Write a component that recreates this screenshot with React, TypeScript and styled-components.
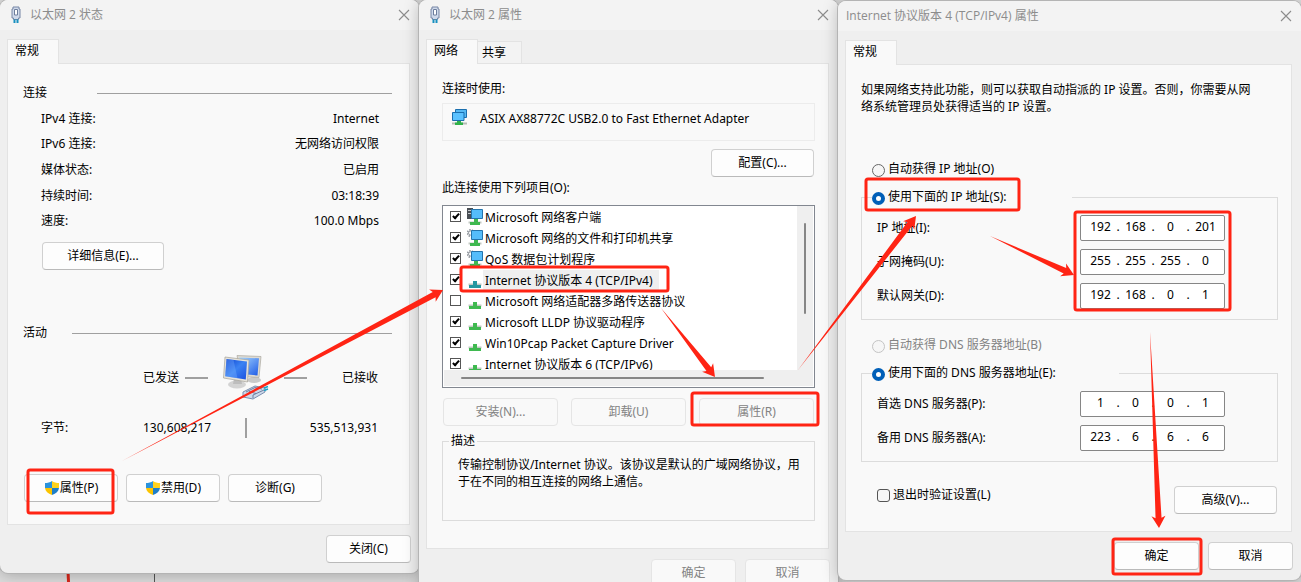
import React from "react";
import styled, { createGlobalStyle, css } from "styled-components";

const GlobalStyle = createGlobalStyle`
  *, *::before, *::after { box-sizing: border-box; }
  body {
    margin: 0;
    background: #dcdcdc;
    color: #000;
    font: 12px/18px "Noto Sans", "Noto Sans CJK SC", sans-serif;
  }
  button, input { font: inherit; color: inherit; }
  p, ul, dl, dd { margin: 0; padding: 0; }
`;

/* ---------- desktop and windows ---------- */

const Desktop = styled.main`
  position: relative;
  height: 100vh;
  overflow: hidden;
  display: grid;
  grid-template-columns: 419fr 419fr 463fr;
  align-items: start;
`;

const Backdrop = styled.svg`
  position: absolute;
  inset: 0;
  width: 100%;
  height: 100%;
`;

const Annotations = styled(Backdrop)`
  z-index: 2;
  pointer-events: none;
`;

const Window = styled.section<{ $lowered?: boolean }>`
  position: relative;
  min-width: 0;
  margin-top: ${(p) => (p.$lowered ? "1px" : "0")};
  padding-bottom: 10px;
  background: #efefef;
  border-radius: 8px;
  box-shadow: 0 0 0 1px #b4b4b4, 0 2px 16px rgba(0, 0, 0, 0.26);
`;

const TitleBar = styled.header`
  display: flex;
  align-items: center;
  height: 30px;
  padding: 0 9px 0 8px;
  background: #f3f3f3;
  border-radius: 8px 8px 0 0;
  color: #8c8c8c;
`;

const Title = styled.h1`
  flex: 1;
  margin: 0;
  font-family: "Open Sans", "Noto Sans CJK SC", sans-serif;
  font-size: 12px;
  font-weight: 400;
`;

const CloseButton = styled.button`
  display: flex;
  padding: 0;
  border: 0;
  background: none;
  color: #8c8c8c;
`;

const TabStrip = styled.div`
  display: flex;
  align-items: flex-end;
  height: 33px;
  padding-left: 7px;
`;

const Tab = styled.button<{ $active?: boolean }>`
  border: 1px solid #e3e3e3;
  border-bottom: 0;
  text-align: left;
  ${(p) =>
    p.$active
      ? css`
          position: relative;
          z-index: 1;
          width: 52px;
          height: 25px;
          margin-bottom: -1px;
          padding: 0 0 2px 7px;
          background: #f9f9f9;
        `
      : css`
          width: 44px;
          height: 22px;
          padding: 0 0 0 4px;
          border-left: 0;
          background: #f3f3f3;
        `}
`;

const Panel = styled.div<{ $top: number; $bottom: number }>`
  margin: 0 9px 0 7px;
  padding: ${(p) => p.$top}px 13px ${(p) => p.$bottom}px 15px;
  border: 1px solid #e3e3e3;
  background: #f9f9f9;
`;

const Footer = styled.footer`
  display: flex;
  justify-content: flex-end;
  gap: 9px;
  padding: 10px 8px 0;
`;

const PushButton = styled.button<{ $width: number }>`
  display: flex;
  align-items: center;
  justify-content: center;
  width: ${(p) => p.$width}px;
  height: 28px;
  padding: 0 0 1px;
  border: 1px solid #d0d0d0;
  border-bottom-color: #bababa;
  border-radius: 4px;
  background: #fdfdfd;
  &:disabled {
    border-color: #e5e5e5;
    background: #f9f9f9;
    color: #838383;
  }
`;

/* ---------- status window ---------- */

const SectionHead = styled.h2<{ $labelWidth: number }>`
  display: grid;
  grid-template-columns: ${(p) => p.$labelWidth}px 1fr;
  align-items: center;
  margin: 0 4px 0 0;
  font-size: 12px;
  font-weight: 400;
  &::after {
    content: "";
    height: 1px;
    background: #a0a0a0;
  }
`;

const StatusList = styled.dl`
  display: flex;
  flex-direction: column;
  height: 128px;
  margin: 4px 17px 8px 18px;
`;

const StatusRow = styled.div`
  flex: 1;
  display: flex;
  align-items: center;
  justify-content: space-between;
`;

const DetailsRow = styled.div`
  padding: 0 0 54px 19px;
`;

const Activity = styled.div`
  display: grid;
  grid-template-columns: 102px 80px 46px 1fr;
  grid-template-rows: 48px 20px;
  row-gap: 16px;
  align-items: center;
  margin: 12px 18px 36px 18px;
`;

const SentHead = styled.div`
  grid-column: 2;
  display: flex;
  align-items: center;
  gap: 6px;
`;

const ReceivedHead = styled.div`
  display: flex;
  align-items: center;
  justify-content: space-between;
  padding-left: 15px;
`;

const Dash = styled.span`
  width: 23px;
  height: 2px;
  background: #a0a0a0;
`;

const Divider = styled.span`
  justify-self: center;
  width: 2px;
  height: 20px;
  background: #a0a0a0;
`;

const Received = styled.span`
  text-align: right;
`;

const ActionRow = styled.div`
  display: flex;
  gap: 8px;
  padding-left: 1px;
`;

/* ---------- adapter properties window ---------- */

const AdapterBox = styled.div`
  display: flex;
  align-items: flex-start;
  gap: 12px;
  height: 38px;
  margin: 5px 0 8px;
  padding: 5px 8px;
  border: 1px solid #ececec;
`;

const AdapterName = styled.span`
  padding-top: 1px;
`;

const ConfigureRow = styled.div`
  display: flex;
  justify-content: flex-end;
  padding: 0 1px 2px 0;
`;

const ListFrame = styled.div`
  display: grid;
  grid-template-columns: 1fr 16px;
  grid-template-rows: 164px 16px;
  height: 183px;
  margin: 8px 0 10px;
  padding: 0 1px 1px;
  border: 1px solid #828790;
  background: #fff;
`;

const ItemList = styled.ul`
  overflow: hidden;
  list-style: none;
`;

const Item = styled.label`
  display: flex;
  align-items: center;
  height: 21px;
  padding-left: 6px;
`;

const ItemCheck = styled.input`
  appearance: none;
  display: flex;
  justify-content: center;
  width: 11px;
  height: 11px;
  margin: 0 6px 0 0;
  border: 1px solid #555;
  background: #fff;
  &:checked::before {
    content: "";
    width: 4px;
    height: 7px;
    border: solid #000;
    border-width: 0 2px 2px 0;
    transform: rotate(42deg);
  }
`;

const ItemName = styled.span<{ $selected?: boolean }>`
  height: 20px;
  padding: 2px 6px 0 2px;
  line-height: 18px;
  white-space: nowrap;
  background: ${(p) => (p.$selected ? "#efefef" : "transparent")};
`;

const VerticalTrack = styled.div`
  padding: 17px 0 0 7px;
  background: #efefef;
  &::before {
    content: "";
    display: block;
    width: 2px;
    height: 91px;
    border-radius: 1px;
    background: #868686;
  }
`;

const HorizontalTrack = styled.div`
  grid-column: 1 / -1;
  padding: 7px 49px 0 17px;
  background: #efefef;
  &::before {
    content: "";
    display: block;
    height: 2px;
    border-radius: 1px;
    background: #868686;
  }
`;

const ItemActions = styled.div`
  display: flex;
  justify-content: space-between;
  padding: 0 1px 6px;
`;

const Description = styled.fieldset`
  height: 89px;
  min-width: 0;
  margin: 0;
  padding: 6px 12px 0 8px;
  border: 1px solid #dcdcdc;
  legend {
    margin-left: -2px;
    padding: 0 2px;
  }
  p {
    padding-left: 7px;
    line-height: 17px;
  }
`;

/* ---------- IPv4 window ---------- */

const Intro = styled.p`
  padding: 0 20px 45px 0;
  line-height: 17px;
`;

const Choice = styled.label<{ $indent?: number; $muted?: boolean }>`
  display: flex;
  align-items: center;
  gap: 3px;
  height: 18px;
  padding-left: ${(p) => p.$indent ?? 0}px;
  color: ${(p) => (p.$muted ? "#838383" : "inherit")};
`;

const Radio = styled.input`
  appearance: none;
  width: 13px;
  height: 13px;
  margin: 2px 0 0;
  border: 1px solid #666;
  border-radius: 50%;
  background: #f6f6f6;
  &:checked {
    border: 4px solid #005fb8;
    background: #fff;
  }
  &:disabled {
    border-color: #c4c4c4;
  }
`;

const SquareCheck = styled.input`
  appearance: none;
  width: 13px;
  height: 13px;
  margin: 0;
  border: 1px solid #555;
  border-radius: 3px;
  background: #f6f6f6;
`;

const AddressGroup = styled.fieldset<{ $gap: number }>`
  display: block;
  min-width: 0;
  margin: 10px 0 16px;
  padding: 9px 52px 10px 10px;
  border: 1px solid #dcdcdc;
  legend {
    width: ${(p) => p.$gap}px;
    padding: 0;
  }
`;

const AddressRows = styled.div`
  display: grid;
  gap: 8px;
  padding-left: 5px;
`;

const AddressRow = styled.div`
  display: flex;
  align-items: center;
  justify-content: space-between;
`;

const AddressBox = styled.div`
  display: flex;
  align-items: center;
  width: 145px;
  height: 26px;
  padding: 0 0 2px 7px;
  border: 1px solid #868686;
  border-radius: 2px;
  background: #fff;
`;

const Octet = styled.input`
  width: 25px;
  height: 18px;
  padding: 0;
  border: 0;
  background: none;
  text-align: center;
`;

const Dot = styled.span`
  width: 10px;
  text-align: center;
`;

const ValidateRow = styled.div`
  display: flex;
  justify-content: space-between;
  align-items: flex-start;
  padding: 8px 1px 0 16px;
`;

/* ---------- icons ---------- */

const PlugIcon = () => (
  <svg width="22" height="18" viewBox="0 0 22 18" aria-hidden="true">
    <path d="M5 1h6v2h1v9h-1.500v1.500h-5V12H4V3h1z" fill="#cfd9ea" stroke="#7686a5" />
    <path d="M6.500 3.500h3V9h-3z" fill="#fff" stroke="#6d7d9c" />
    <path d="M6.500 13.500V17M9.500 13.500V17" stroke="#1890c0" strokeWidth="2" />
  </svg>
);

const CloseIcon = () => (
  <svg width="12" height="12" viewBox="0 0 12 12" aria-hidden="true">
    <path d="M1 1l10 10M11 1L1 11" stroke="currentColor" strokeWidth="1.100" fill="none" />
  </svg>
);

const ShieldIcon = () => (
  <svg width="16" height="16" viewBox="0 0 16 16" aria-hidden="true">
    <path d="M8 1C6 2.500 3.500 3 1 3v5h7z" fill="#2b93dc" />
    <path d="M8 1c2 1.500 4.500 2 7 2v5H8z" fill="#ffd21c" />
    <path d="M1 8c.3 3.200 3 5.600 7 7V8z" fill="#fbc400" />
    <path d="M15 8c-.3 3.200-3 5.600-7 7V8z" fill="#1f7fc9" />
  </svg>
);

const ComputersIcon = () => (
  <svg width="46" height="46" viewBox="0 0 46 46" aria-hidden="true">
    <defs>
      <linearGradient id="screen" x1="0" y1="0" x2="1" y2="1">
        <stop offset="0" stopColor="#0a3fd0" />
        <stop offset="0.500" stopColor="#3b82f2" />
        <stop offset="1" stopColor="#1b50e0" />
      </linearGradient>
      <linearGradient id="screenBack" x1="0" y1="0" x2="1" y2="1">
        <stop offset="0" stopColor="#a8d8ff" />
        <stop offset="1" stopColor="#1d5ae6" />
      </linearGradient>
    </defs>
    <ellipse cx="31" cy="25" rx="7" ry="3" fill="#c9c9c9" />
    <path d="M14 .5l24 1-2 21-18-1z" fill="#dedbd3" stroke="#aaa79f" strokeWidth="0.700" />
    <path d="M16 2.500l20 .8L34.500 20.500l-10-1z" fill="url(#screenBack)" />
    <ellipse cx="14" cy="29.500" rx="9" ry="4" fill="#d3d3d3" />
    <path d="M11 24h7l1 5h-9z" fill="#bdbdbd" />
    <path d="M2 2l24 3-1.500 22L.5 23z" fill="#e6e3db" stroke="#a5a29a" strokeWidth="0.700" />
    <path d="M3.500 4L24 6.500 22.800 24.500 2.200 21.200z" fill="url(#screen)" />
    <path d="M3.500 4l7 .9 4 18.300-12.300-2z" fill="#7fb4ff" opacity="0.350" />
    <path d="M20 37l12-6 10 2v4l-12 7-10-2z" fill="#ccd8ea" stroke="#7b8eae" />
    <path d="M23 37l9-4.500 7 1.500M30 40l11-5M30 40v3M26 36.500l7 2" stroke="#6d7fa0" fill="none" />
    <path d="M41 33l4-1.500M41 35.500l4-1.500" stroke="#19a3c8" strokeWidth="1.500" />
  </svg>
);

const AdapterIcon = () => (
  <svg width="17" height="17" viewBox="0 0 17 17" aria-hidden="true">
    <path d="M4.500 .5h11v8h-11z" fill="#55b8f2" stroke="#1b6fae" />
    <path d="M1.500 3.500h11.500v8H1.500z" fill="#5bc2ff" stroke="#1b6fae" />
    <path d="M1 14.500h15" stroke="#b5bdb5" strokeWidth="2" />
    <path d="M6 12h4v1.500h2v2.500h-8v-2.500h2z" fill="#31b14a" />
  </svg>
);

type ItemKind = "client" | "service" | "protocol" | "selected";

const ItemIcon = ({ kind }: { kind: ItemKind }) => {
  if (kind === "protocol" || kind === "selected") {
    const fill = kind === "selected" ? "#2597a0" : "#3fb950";
    return (
      <svg width="16" height="19" viewBox="0 0 16 19" aria-hidden="true">
        <path d="M1.500 14.500h13" stroke="#c2c8c2" strokeWidth="2" />
        <path d="M6 11h4v4h4v3H2v-3h4z" fill={fill} />
      </svg>
    );
  }
  return (
    <svg width="16" height="19" viewBox="0 0 16 19" aria-hidden="true">
      {kind === "client" ? (
        <g>
          <path d="M0 1h6v11H0z" fill="#4a4f55" />
          <path d="M1 3.500h3M1 6.500h3" stroke="#c5c9cd" />
        </g>
      ) : (
        <g fill="none" stroke="#9a9fa5">
          <circle cx="3.500" cy="5" r="3" strokeWidth="2" strokeDasharray="1.500 1" />
          <circle cx="3.500" cy="5" r="2" />
        </g>
      )}
      <path d="M4.500 2.500h11v9h-11z" fill="#55bdfb" stroke="#2474ac" />
      <path d="M1.500 15.500h13" stroke="#c2c8c2" strokeWidth="2" />
      <path d="M7 12h4v3h2v3H3v-3h4z" fill="#3fb950" />
    </svg>
  );
};

/* ---------- data ---------- */

const statusRows = [
  ["IPv4 连接:", "Internet"],
  ["IPv6 连接:", "无网络访问权限"],
  ["媒体状态:", "已启用"],
  ["持续时间:", "03:18:39"],
  ["速度:", "100.0 Mbps"],
];

const items: { name: string; kind: ItemKind; off?: boolean }[] = [
  { name: "Microsoft 网络客户端", kind: "client" },
  { name: "Microsoft 网络的文件和打印机共享", kind: "service" },
  { name: "QoS 数据包计划程序", kind: "service" },
  { name: "Internet 协议版本 4 (TCP/IPv4)", kind: "selected" },
  { name: "Microsoft 网络适配器多路传送器协议", kind: "protocol", off: true },
  { name: "Microsoft LLDP 协议驱动程序", kind: "protocol" },
  { name: "Win10Pcap Packet Capture Driver", kind: "protocol" },
  { name: "Internet 协议版本 6 (TCP/IPv6)", kind: "protocol" },
];

type Address = { id: string; label: string; value: string };

const ipFields: Address[] = [
  { id: "ip", label: "IP 地址(I):", value: "192.168.0.201" },
  { id: "mask", label: "子网掩码(U):", value: "255.255.255.0" },
  { id: "gateway", label: "默认网关(D):", value: "192.168.0.1" },
];

const dnsFields: Address[] = [
  { id: "dns1", label: "首选 DNS 服务器(P):", value: "1.0.0.1" },
  { id: "dns2", label: "备用 DNS 服务器(A):", value: "223.6.6.6" },
];

/* Marker frames: x, y, width, height. */
const frames = [
  [28, 470, 85, 43],
  [461, 267, 207, 24],
  [692, 393, 126, 32],
  [866, 179, 153, 31],
  [1075, 212, 155, 98],
  [1113, 539, 88, 35],
];

/* Each arrow runs from a thin tail to its tip: x1, y1, x2, y2. */
const arrows = [
  [122, 461, 443, 290],
  [661, 308, 715, 377],
  [798, 370, 916, 216],
  [990, 236, 1074, 275],
  [1150, 332, 1159, 528],
];

function arrowPath([x1, y1, x2, y2]: number[]) {
  const length = Math.hypot(x2 - x1, y2 - y1);
  const ux = (x2 - x1) / length;
  const uy = (y2 - y1) / length;
  const at = (back: number, side: number) =>
    `${x2 - ux * back - uy * side} ${y2 - uy * back + ux * side}`;
  return `M${x1} ${y1}L${at(10, 3)}L${at(12, 7)}L${x2} ${y2}L${at(12, -7)}L${at(10, -3)}Z`;
}

/* ---------- shared parts ---------- */

const WindowTitle = ({ text, plug }: { text: string; plug?: boolean }) => (
  <TitleBar>
    {plug && <PlugIcon />}
    <Title>{text}</Title>
    <CloseButton aria-label="关闭">
      <CloseIcon />
    </CloseButton>
  </TitleBar>
);

const AddressField = ({ id, label, value }: Address) => (
  <AddressRow>
    <label htmlFor={id}>{label}</label>
    <AddressBox>
      {value.split(".").map((part, i) => (
        <React.Fragment key={i}>
          {i > 0 && <Dot>.</Dot>}
          <Octet
            id={i === 0 ? id : undefined}
            aria-label={i === 0 ? undefined : `${label} ${i + 1}`}
            defaultValue={part}
          />
        </React.Fragment>
      ))}
    </AddressBox>
  </AddressRow>
);

/* ---------- windows ---------- */

const StatusWindow = () => (
  <Window>
    <WindowTitle text="以太网 2 状态" plug />
    <TabStrip>
      <Tab $active>常规</Tab>
    </TabStrip>
    <Panel $top={20} $bottom={22}>
      <SectionHead $labelWidth={74}>连接</SectionHead>
      <StatusList>
        {statusRows.map(([name, value]) => (
          <StatusRow key={name}>
            <dt>{name}</dt>
            <dd>{value}</dd>
          </StatusRow>
        ))}
      </StatusList>
      <DetailsRow>
        <PushButton $width={122}>详细信息(E)...</PushButton>
      </DetailsRow>
      <SectionHead $labelWidth={49}>活动</SectionHead>
      <Activity>
        <SentHead>
          已发送
          <Dash />
        </SentHead>
        <ComputersIcon />
        <ReceivedHead>
          <Dash />
          已接收
        </ReceivedHead>
        <span>字节:</span>
        <span>130,608,217</span>
        <Divider />
        <Received>535,513,931</Received>
      </Activity>
      <ActionRow>
        <PushButton $width={94}>
          <ShieldIcon />
          属性(P)
        </PushButton>
        <PushButton $width={94}>
          <ShieldIcon />
          禁用(D)
        </PushButton>
        <PushButton $width={94}>诊断(G)</PushButton>
      </ActionRow>
    </Panel>
    <Footer>
      <PushButton $width={85}>关闭(C)</PushButton>
    </Footer>
  </Window>
);

const AdapterWindow = () => (
  <Window>
    <WindowTitle text="以太网 2 属性" plug />
    <TabStrip>
      <Tab $active>网络</Tab>
      <Tab>共享</Tab>
    </TabStrip>
    <Panel $top={16} $bottom={27}>
      <div>连接时使用:</div>
      <AdapterBox>
        <AdapterIcon />
        <AdapterName>ASIX AX88772C USB2.0 to Fast Ethernet Adapter</AdapterName>
      </AdapterBox>
      <ConfigureRow>
        <PushButton $width={103}>配置(C)...</PushButton>
      </ConfigureRow>
      <div>此连接使用下列项目(O):</div>
      <ListFrame>
        <ItemList>
          {items.map(({ name, kind, off }) => (
            <li key={name}>
              <Item>
                <ItemCheck type="checkbox" defaultChecked={!off} />
                <ItemIcon kind={kind} />
                <ItemName $selected={kind === "selected"}>{name}</ItemName>
              </Item>
            </li>
          ))}
        </ItemList>
        <VerticalTrack />
        <HorizontalTrack />
      </ListFrame>
      <ItemActions>
        <PushButton $width={115} disabled>安装(N)...</PushButton>
        <PushButton $width={115} disabled>卸载(U)</PushButton>
        <PushButton $width={115} disabled>属性(R)</PushButton>
      </ItemActions>
      <Description>
        <legend>描述</legend>
        <p>传输控制协议/Internet 协议。该协议是默认的广域网络协议，用于在不同的相互连接的网络上通信。</p>
      </Description>
    </Panel>
    <Footer>
      <PushButton $width={85} disabled>确定</PushButton>
      <PushButton $width={85} disabled>取消</PushButton>
    </Footer>
  </Window>
);

const Ipv4Window = () => (
  <Window $lowered>
    <WindowTitle text="Internet 协议版本 4 (TCP/IPv4) 属性" />
    <TabStrip>
      <Tab $active>常规</Tab>
    </TabStrip>
    <Panel $top={16} $bottom={17}>
      <Intro>
        如果网络支持此功能，则可以获取自动指派的 IP 设置。否则，你需要从网络系统管理员处获得适当的 IP 设置。
      </Intro>
      <Choice $indent={11}>
        <Radio type="radio" name="address" />
        自动获得 IP 地址(O)
      </Choice>
      <AddressGroup $gap={200}>
        <legend>
          <Choice>
            <Radio type="radio" name="address" defaultChecked />
            使用下面的 IP 地址(S):
          </Choice>
        </legend>
        <AddressRows>
          {ipFields.map((f) => (
            <AddressField key={f.id} {...f} />
          ))}
        </AddressRows>
      </AddressGroup>
      <Choice $indent={11} $muted>
        <Radio type="radio" name="dns" disabled />
        自动获得 DNS 服务器地址(B)
      </Choice>
      <AddressGroup $gap={247}>
        <legend>
          <Choice>
            <Radio type="radio" name="dns" defaultChecked />
            使用下面的 DNS 服务器地址(E):
          </Choice>
        </legend>
        <AddressRows>
          {dnsFields.map((f) => (
            <AddressField key={f.id} {...f} />
          ))}
        </AddressRows>
      </AddressGroup>
      <ValidateRow>
        <Choice>
          <SquareCheck type="checkbox" />
          退出时验证设置(L)
        </Choice>
        <PushButton $width={103}>高级(V)...</PushButton>
      </ValidateRow>
    </Panel>
    <Footer>
      <PushButton $width={85}>确定</PushButton>
      <PushButton $width={85}>取消</PushButton>
    </Footer>
  </Window>
);

export default function App() {
  return (
    <>
      <GlobalStyle />
      <Desktop lang="zh-CN">
        <Backdrop viewBox="0 0 1301 582" preserveAspectRatio="none" aria-hidden="true">
          <path d="M66 560h3l1 22h-3z" fill="#d9281c" />
          <path d="M154.500 560v22" stroke="#555" />
        </Backdrop>
        <StatusWindow />
        <AdapterWindow />
        <Ipv4Window />
        <Annotations viewBox="0 0 1301 582" preserveAspectRatio="none" aria-hidden="true">
          {frames.map(([x, y, width, height]) => (
            <rect
              key={x}
              x={x}
              y={y}
              width={width}
              height={height}
              rx="2"
              fill="none"
              stroke="#ff2414"
              strokeWidth="3"
            />
          ))}
          {arrows.map((a) => (
            <path key={a[0]} d={arrowPath(a)} fill="#ff2414" />
          ))}
        </Annotations>
      </Desktop>
    </>
  );
}
